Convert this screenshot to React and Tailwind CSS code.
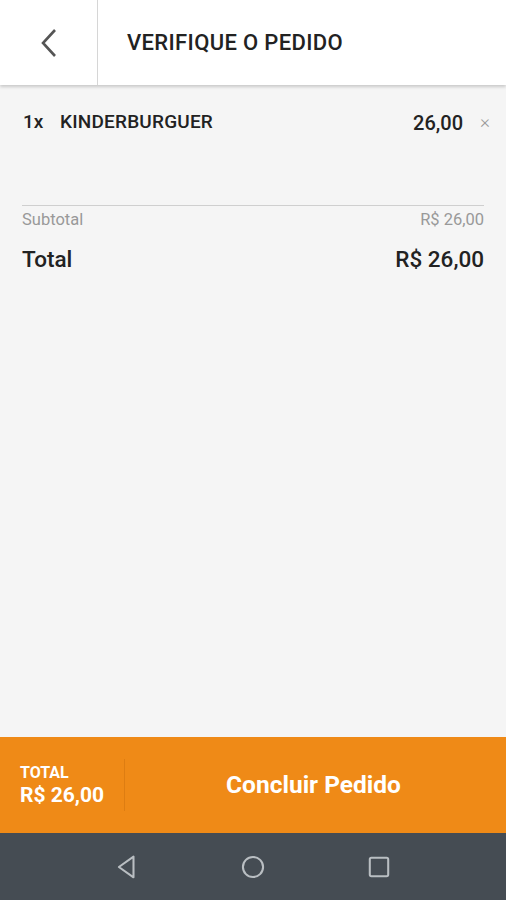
const App = () => {
  return (
    <div className="flex flex-col h-[900px] w-full bg-[#f5f5f5] font-['Roboto',sans-serif] text-[#222]">
      <header className="flex h-[85px] bg-white shadow-[0_2px_3px_rgba(0,0,0,0.18)] z-10">
        <div className="w-[98px] flex items-center justify-center border-r border-[#d6d6d6]">
          <svg width="22" height="32" viewBox="0 0 22 32" fill="none">
            <path d="M17 3 L5 16 L17 29" stroke="#555" strokeWidth="2.6" />
          </svg>
        </div>
        <div className="flex items-center pl-[29px] text-[22px] font-medium tracking-[0.35px] text-[#222]">
          VERIFIQUE O PEDIDO
        </div>
      </header>

      <main className="flex-1 px-[22px]">
        <div className="flex items-center h-[75px] text-[19px] font-medium">
          <span className="w-[38px] pl-[1px]">1x</span>
          <span className="flex-1 tracking-[0.2px]">KINDERBURGUER</span>
          <span className="text-[20px]">26,00</span>
          <span className="ml-[17px] mr-[-6px] text-[#999] text-[19px] font-light">×</span>
        </div>
        <div className="mt-[45px] border-t border-[#cfcfcf]" />
        <div className="flex justify-between pt-[2px] text-[16.5px] text-[#999]">
          <span>Subtotal</span>
          <span>R$ 26,00</span>
        </div>
        <div className="flex justify-between pt-[10px] text-[22.5px] font-medium text-[#222]">
          <span>Total</span>
          <span>R$ 26,00</span>
        </div>
      </main>

      <div className="flex h-[96px] bg-[#ef8a17] text-white">
        <div className="flex flex-col justify-center w-[125px] pl-[20px] leading-none border-r border-[#dd7d12] my-[22px]">
          <span className="text-[16px] font-bold">TOTAL</span>
          <span className="mt-[4px] text-[21px] font-bold">R$ 26,00</span>
        </div>
        <div className="flex-1 flex items-center justify-center text-[24.5px] font-bold pr-[4px]">
          Concluir Pedido
        </div>
      </div>

      <nav className="flex h-[67px] items-center justify-center gap-[100px] bg-[#454c53]">
        <svg width="26" height="26" viewBox="0 0 24 24" fill="none">
          <path d="M18 2.5 L18 21.5 L4.5 12 Z" stroke="#b9bec2" strokeWidth="1.9" strokeLinejoin="round" />
        </svg>
        <svg width="26" height="26" viewBox="0 0 24 24" fill="none">
          <circle cx="12" cy="12" r="9.3" stroke="#b9bec2" strokeWidth="1.9" />
        </svg>
        <svg width="26" height="26" viewBox="0 0 24 24" fill="none">
          <rect x="3.5" y="3.5" width="17" height="17" rx="1.5" stroke="#b9bec2" strokeWidth="1.9" />
        </svg>
      </nav>
    </div>
  );
};

export default App;
